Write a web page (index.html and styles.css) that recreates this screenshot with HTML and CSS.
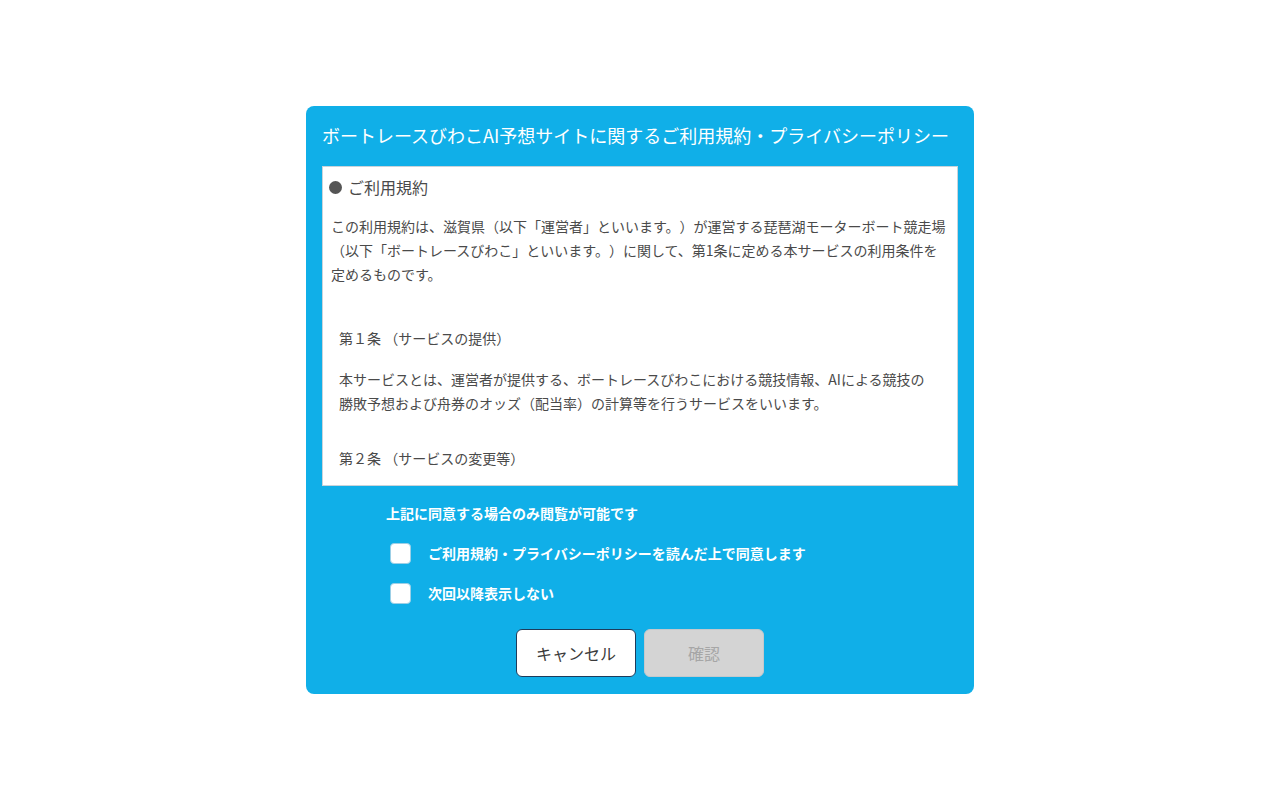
FILE: index.html
```html
<!DOCTYPE html>
<html lang="ja">
<head>
<meta charset="utf-8">
<title>ご利用規約・プライバシーポリシー</title>
<link rel="stylesheet" href="styles.css">
</head>
<body>
<div class="page">
  <div class="dialog">
    <h1 class="dialog-title">ボートレースびわこAI予想サイトに関するご利用規約・プライバシーポリシー</h1>
    <div class="terms">
      <h2 class="terms-heading"><span class="dot"></span>ご利用規約</h2>
      <p class="terms-intro">この利用規約は、滋賀県（以下「運営者」といいます。）が運営する琵琶湖モーターボート競走場（以下「ボートレースびわこ」といいます。）に関して、第1条に定める本サービスの利用条件を定めるものです。</p>
      <div class="article">
        <h3 class="article-title">第１条 （サービスの提供）</h3>
        <p class="article-body">本サービスとは、運営者が提供する、ボートレースびわこにおける競技情報、AIによる競技の勝敗予想および舟券のオッズ（配当率）の計算等を行うサービスをいいます。</p>
      </div>
      <div class="article">
        <h3 class="article-title">第２条 （サービスの変更等）</h3>
      </div>
    </div>
    <div class="consent">
      <p class="consent-note">上記に同意する場合のみ閲覧が可能です</p>
      <div class="check-row"><span class="check-box"></span><span class="check-label">ご利用規約・プライバシーポリシーを読んだ上で同意します</span></div>
      <div class="check-row"><span class="check-box"></span><span class="check-label">次回以降表示しない</span></div>
    </div>
    <div class="actions">
      <button class="btn btn-cancel" type="button">キャンセル</button>
      <button class="btn btn-confirm" type="button" disabled>確認</button>
    </div>
  </div>
</div>
</body>
</html>
```

FILE: styles.css
```css
html, body {
  margin: 0;
  padding: 0;
  background: #ffffff;
}
body {
  font-family: "Noto Sans CJK JP", "Noto Sans", sans-serif;
  color: #4a4a4a;
  text-spacing-trim: space-all;
}
.page {
  width: 1280px;
  height: 800px;
  display: flex;
  justify-content: center;
  align-items: flex-start;
  padding-top: 106px;
  box-sizing: border-box;
}
.dialog {
  width: 668px;
  height: 588px;
  box-sizing: border-box;
  background: #10afe8;
  border-radius: 8px;
  padding: 14px 16px 0 16px;
  display: flex;
  flex-direction: column;
}
.dialog-title {
  margin: 0;
  font-size: 18px;
  font-weight: 400;
  line-height: 30px;
  color: #ffffff;
  white-space: nowrap;
}
.terms {
  margin-top: 16px;
  height: 320px;
  flex: none;
  box-sizing: border-box;
  background: #ffffff;
  border: 1px solid #c9d3da;
  padding: 8px 8px 0 8px;
  overflow: hidden;
}
.terms-heading {
  margin: 0;
  display: flex;
  align-items: center;
  font-size: 16px;
  font-weight: 400;
  line-height: 24px;
  color: #4a4a4a;
}
.dot {
  width: 13px;
  height: 13px;
  border-radius: 50%;
  background: #555555;
  margin: 0 6px 0 -2px;
}
.terms-intro {
  margin: 15px 0 0 0;
  font-size: 14px;
  line-height: 24px;
  color: #4a4a4a;
}
.article {
  padding: 0 16px 0 8px;
}
.article-title {
  margin: 40px 0 0 0;
  font-size: 14px;
  font-weight: 400;
  line-height: 24px;
  color: #4a4a4a;
}
.article-body {
  margin: 17px 0 0 0;
  font-size: 14px;
  line-height: 24px;
  color: #4a4a4a;
}
.article + .article .article-title {
  margin-top: 31px;
}
.consent {
  padding: 16px 0 0 64px;
  display: flex;
  flex-direction: column;
  align-items: flex-start;
}
.consent-note {
  margin: 0;
  font-size: 14px;
  font-weight: 700;
  line-height: 22px;
  color: #ffffff;
  white-space: nowrap;
}
.check-row {
  display: flex;
  align-items: center;
  margin-top: 18px;
  padding-left: 4px;
}
.check-box {
  width: 21px;
  height: 21px;
  background: #ffffff;
  border-radius: 4px;
  border: 1px solid #9ccfe6;
  box-sizing: border-box;
  flex: none;
}
.check-label {
  margin-left: 17px;
  font-size: 14px;
  font-weight: 700;
  line-height: 22px;
  color: #ffffff;
  white-space: nowrap;
}
.actions {
  display: flex;
  justify-content: center;
  gap: 8px;
  margin-top: 25px;
}
.btn {
  width: 120px;
  height: 48px;
  border-radius: 6px;
  font-family: "Noto Sans CJK JP", "Noto Sans", sans-serif;
  font-size: 16px;
  font-weight: 400;
  padding: 0;
}
.btn-cancel {
  background: #ffffff;
  border: 1px solid #1d3c5c;
  color: #3a3a3a;
}
.btn-confirm {
  background: #d4d4d4;
  border: 1px solid #c4c8cc;
  color: #a6a6a6;
}
```
